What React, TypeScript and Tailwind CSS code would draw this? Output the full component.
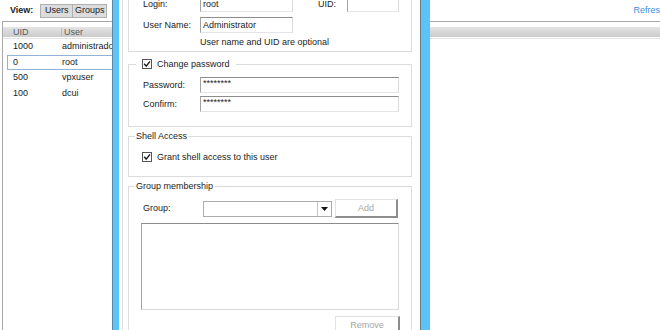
import React from 'react';

const users = [
    { uid: '1000', name: 'administrador', selected: false },
    { uid: '0', name: 'root', selected: true },
    { uid: '500', name: 'vpxuser', selected: false },
    { uid: '100', name: 'dcui', selected: false },
];

const CheckBox = () => (
    <svg width="10" height="10" viewBox="0 0 10 10" className="shrink-0">
        <rect x="0.5" y="0.5" width="9" height="9" fill="#fff" stroke="#555" />
        <path d="M2.2 4.8 L4.2 7.2 L8 2.4" fill="none" stroke="#1a1a1a" strokeWidth="1.4" />
    </svg>
);

const TextBox = ({ value, className }: { value?: string; className: string }) => (
    <div
        className={`h-[16px] flex items-center pl-[2px] bg-white border-t border-l border-t-[#8c8c8c] border-l-[#a3a3a3] border-r border-b border-r-[#dadada] border-b-[#e4e4e4] ${className}`}
    >
        {value}
    </div>
);

const Button = ({ label, className }: { label: string; className: string }) => (
    <div
        className={`h-[19px] flex items-center justify-center text-[#a6a6a6] bg-white border-t border-l border-t-[#e2e2e2] border-l-[#e2e2e2] border-r-2 border-b-2 border-r-[#8d8d8d] border-b-[#8d8d8d] ${className}`}
    >
        {label}
    </div>
);

export default function App() {
    return (
        <div className="relative w-[660px] h-[330px] overflow-hidden bg-white font-['Liberation_Sans',Arial,sans-serif] text-[9px] leading-none text-[#1b1b1b]">
            {/* toolbar */}
            <div className="flex h-[21px] items-center pl-[10px]">
                <span className="font-bold">View:</span>
                <div className="ml-[7px] flex">
                    <div className="w-[33px] h-[14px] flex items-center justify-center bg-[#dcdcdc] border border-[#b0b0b0]">Users</div>
                    <div className="w-[34px] h-[14px] flex items-center justify-center bg-[#dcdcdc] border border-[#b0b0b0] border-l-0">Groups</div>
                </div>
                <span className="ml-auto mr-[-5px] text-[#3a8ee8]">Refresh</span>
            </div>

            {/* user list */}
            <div className="ml-[2px] h-[309px] border-l border-t border-[#a9a9a9]">
                <div className="mt-[5px] h-[10px] flex items-center bg-gradient-to-b from-[#e4e4e4] to-[#cccccc] text-[#5a5a5a]">
                    <span className="w-[59px] pl-[10px] border-r border-[#bdbdbd]">UID</span>
                    <span className="pl-[2px]">User</span>
                </div>
                <div className="h-[2px] border-b border-[#e3e3e3]" />
                {users.map((u) => (
                    <div
                        key={u.uid}
                        className={`ml-[4px] w-[150px] h-[15.5px] flex items-center border ${u.selected ? 'border-[#93b2d8]' : 'border-transparent'}`}
                    >
                        <span className="w-[54px] pl-[5px]">{u.uid}</span>
                        <span className="whitespace-nowrap">{u.name}</span>
                    </div>
                ))}
            </div>

            {/* edit user dialog */}
            <div className="absolute left-[112px] top-[-20px] h-[360px] w-[318px] flex border-l border-[#5a86a4] bg-[#5cc3f8] pl-[6px] pr-[9px]">
                <div className="flex-1 bg-white border-r border-[#6b7c88] pl-[3px]">
                    <div className="h-full border-l border-[#dedede] pl-[5px] pr-[8px]">
                        {/* account */}
                        <div className="mt-[6px] border border-[#dcdcdc] pl-[14px] pt-[9px] pb-[3px]">
                            <div className="flex h-[16px] items-center">
                                <span className="w-[57px]">Login:</span>
                                <TextBox value="root" className="w-[93px]" />
                                <span className="ml-[25px] w-[29px]">UID:</span>
                                <TextBox className="w-[52px]" />
                            </div>
                            <div className="mt-[5px] flex h-[16px] items-center">
                                <span className="w-[57px]">User Name:</span>
                                <TextBox value="Administrator" className="w-[93px]" />
                            </div>
                            <div className="mt-[4px] h-[11px] flex items-center pl-[57px]">User name and UID are optional</div>
                        </div>

                        {/* password */}
                        <fieldset className="mt-[6px] border border-[#dcdcdc] p-0">
                            <legend className="ml-[7px] px-[6px] h-[12px] flex items-center">
                                <CheckBox />
                                <span className="ml-[5px]">Change password</span>
                            </legend>
                            <div className="pl-[14px] pt-[7px] pb-[14px]">
                                <div className="flex h-[16px] items-center">
                                    <span className="w-[57px]">Password:</span>
                                    <TextBox value="********" className="w-[199px] items-start pt-[1px]" />
                                </div>
                                <div className="mt-[3px] flex h-[16px] items-center">
                                    <span className="w-[57px]">Confirm:</span>
                                    <TextBox value="********" className="w-[199px] items-start pt-[1px]" />
                                </div>
                            </div>
                        </fieldset>

                        {/* shell */}
                        <fieldset className="mt-[3px] border border-[#dcdcdc] p-0">
                            <legend className="ml-[6px] px-[1px] h-[12px] flex items-center">Shell Access</legend>
                            <div className="pl-[13px] pt-[9px] pb-[13px]">
                                <div className="flex h-[12px] items-center">
                                    <CheckBox />
                                    <span className="ml-[5px]">Grant shell access to this user</span>
                                </div>
                            </div>
                        </fieldset>

                        {/* groups */}
                        <fieldset className="mt-[3px] border border-[#dcdcdc] p-0">
                            <legend className="ml-[5px] px-[2px] h-[12px] flex items-center">Group membership</legend>
                            <div className="pl-[12px] pt-[7px] pb-[20px]">
                                <div className="flex h-[19px] items-center">
                                    <span className="ml-[2px] w-[60px]">Group:</span>
                                    <div className="w-[129px] h-[16px] flex border border-[#acacac] bg-white">
                                        <div className="flex-1" />
                                        <div className="w-[14px] border-l border-[#c4c4c4] flex items-center justify-center">
                                            <svg width="7" height="4" viewBox="0 0 7 4">
                                                <path d="M0 0 H7 L3.5 4 Z" fill="#111" />
                                            </svg>
                                        </div>
                                    </div>
                                    <Button label="Add" className="ml-[3px] w-[63px]" />
                                </div>
                                <div className="mt-[5px] w-[258px] h-[87px] bg-white border-t border-l border-t-[#8c8c8c] border-l-[#a3a3a3] border-r border-b border-r-[#dadada] border-b-[#dcdcdc]" />
                                <Button label="Remove" className="mt-[6px] ml-[194px] w-[65px]" />
                            </div>
                        </fieldset>
                    </div>
                </div>
            </div>
        </div>
    );
}
